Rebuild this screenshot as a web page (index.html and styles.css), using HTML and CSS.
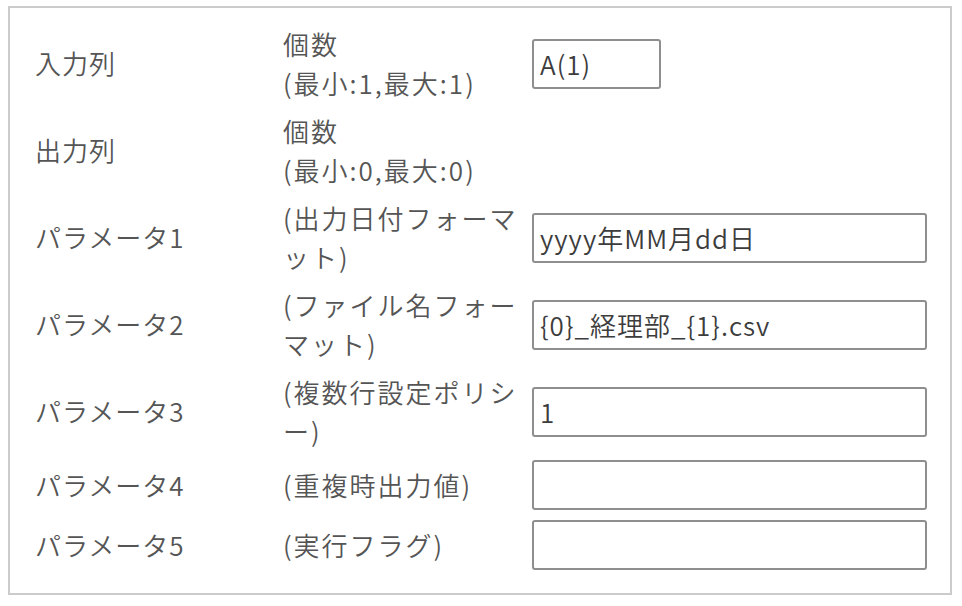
FILE: index.html
```html
<!DOCTYPE html>
<html lang="ja">
<head>
    <meta charset="UTF-8">
    <meta name="viewport" content="width=device-width, initial-scale=1.0">
    <title>パラメータ設定</title>
    <link rel="stylesheet" href="styles.css">
</head>
<body>
    <div class="panel">
        <table class="param-table">
            <tr>
                <td class="name">入力列</td>
                <td class="desc">個数<br>(最小:1,最大:1)</td>
                <td class="value"><input type="text" class="short" value="A(1)"></td>
            </tr>
            <tr>
                <td class="name">出力列</td>
                <td class="desc">個数<br>(最小:0,最大:0)</td>
                <td class="value"></td>
            </tr>
            <tr>
                <td class="name">パラメータ1</td>
                <td class="desc">(出力日付フォーマット)</td>
                <td class="value"><input type="text" value="yyyy年MM月dd日"></td>
            </tr>
            <tr>
                <td class="name">パラメータ2</td>
                <td class="desc">(ファイル名フォーマット)</td>
                <td class="value"><input type="text" value="{0}_経理部_{1}.csv"></td>
            </tr>
            <tr>
                <td class="name">パラメータ3</td>
                <td class="desc">(複数行設定ポリシー)</td>
                <td class="value"><input type="text" value="1"></td>
            </tr>
            <tr>
                <td class="name">パラメータ4</td>
                <td class="desc">(重複時出力値)</td>
                <td class="value"><input type="text" value=""></td>
            </tr>
            <tr>
                <td class="name">パラメータ5</td>
                <td class="desc">(実行フラグ)</td>
                <td class="value"><input type="text" value=""></td>
            </tr>
        </table>
    </div>
</body>
</html>
```

FILE: styles.css
```css
body {
    margin: 0;
    background-color: #ffffff;
    font-family: "Meiryo UI", "Noto Sans CJK JP", sans-serif;
    font-size: 26px;
    font-weight: 350;
    letter-spacing: 1px;
    color: #555555;
}
.panel {
    box-sizing: border-box;
    width: 944px;
    height: 589px;
    margin: 6px 0 0 8px;
    padding: 12px 0 0 25px;
    border: 2px solid #cbcbcb;
}
.param-table {
    border-collapse: collapse;
}
.param-table td {
    padding: 5px 0;
    line-height: 38.5px;
    vertical-align: middle;
}
.name {
    width: 248px;
}
.desc {
    width: 245px;
    padding-right: 4px !important;
    letter-spacing: 2px;
}
.value {
    width: 395px;
}
input[type="text"] {
    box-sizing: border-box;
    display: block;
    width: 395px;
    height: 50px;
    margin: 0;
    padding: 0 6px;
    border: 2px solid #8e8e8e;
    border-radius: 3px;
    font-family: inherit;
    font-size: 26px;
    font-weight: 350;
    letter-spacing: 1px;
    color: #3c3c3c;
    background-color: #ffffff;
}
input.short {
    width: 129px;
}
```
